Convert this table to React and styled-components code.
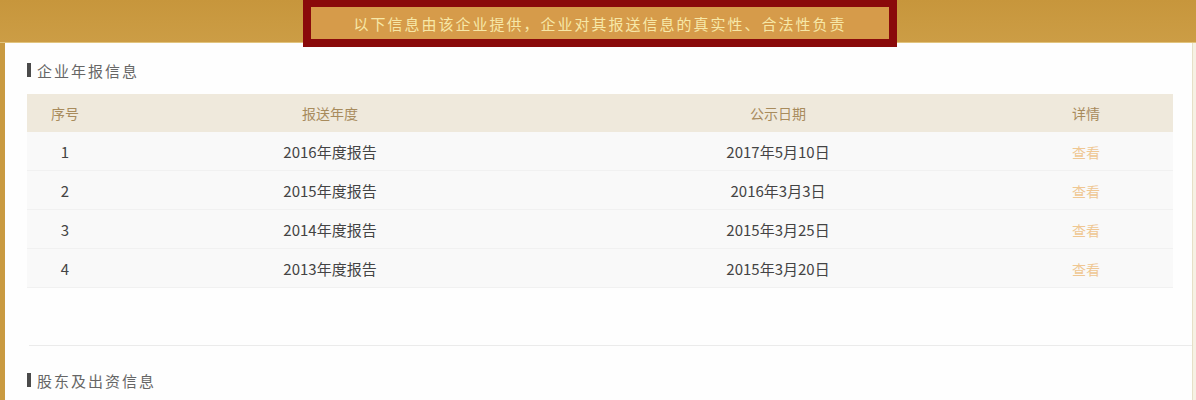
import React from 'react';
import styled, { createGlobalStyle } from 'styled-components';

const GlobalStyle = createGlobalStyle`
  html, body {
    margin: 0;
    padding: 0;
    background: #f6f1e4;
    font-family: "Noto Sans CJK SC", "Noto Sans", sans-serif;
  }
`;

const Page = styled.div`
  width: 1196px;
  height: 400px;
  overflow: hidden;
  display: flex;
  flex-direction: column;
`;

const TopBar = styled.div`
  height: 43px;
  background: linear-gradient(#c7963c, #cc9d45);
  border-bottom: 1px solid #e2c47e;
  box-sizing: border-box;
  display: flex;
  justify-content: center;
  padding-left: 4px;
  position: relative;
  z-index: 2;
`;

const Notice = styled.div`
  width: 594px;
  height: 47px;
  margin-bottom: -4px;
  box-sizing: border-box;
  border: 8px solid #8a0a0b;
  border-top-width: 7px;
  background: #d69b4a;
  color: #f7e8a8;
  font-size: 15px;
  letter-spacing: 2px;
  display: flex;
  align-items: center;
  justify-content: center;
`;

const Panel = styled.div`
  flex: 1;
  background: #fefefe;
  border-left: 5px solid #c99a40;
  border-right: 1px solid #e6dfc6;
  margin-right: 3px;
  padding: 16px 19px 0 22px;
  display: flex;
  flex-direction: column;
`;

const SectionTitle = styled.div`
  display: flex;
  align-items: center;
  gap: 6px;
  height: 22px;
  font-size: 15px;
  letter-spacing: 2px;
  color: #666;

  &::before {
    content: '';
    width: 4px;
    height: 14px;
    background: #4a4a4a;
  }
`;

const Table = styled.table`
  width: 1146px;
  margin-top: 13px;
  border-collapse: collapse;
  table-layout: fixed;
`;

const Th = styled.th`
  height: 38px;
  padding: 0;
  background: #efe9dc;
  color: #a88b5c;
  font-size: 14px;
  font-weight: normal;
  text-align: center;
`;

const Td = styled.td`
  height: 38px;
  padding: 0;
  background: #f9f9f9;
  border-bottom: 1px solid #f1f1f1;
  color: #444;
  font-size: 15px;
  text-align: center;
`;

const ViewLink = styled.a`
  color: #efc793;
  font-size: 14px;
  text-decoration: none;
  cursor: pointer;
`;

const Divider = styled.div`
  height: 1px;
  background: #ebebeb;
  margin: 57px -19px 0 2px;
`;

const SecondTitle = styled(SectionTitle)`
  margin-top: 23px;
`;

const reports = [
  { no: 1, year: '2016年度报告', date: '2017年5月10日' },
  { no: 2, year: '2015年度报告', date: '2016年3月3日' },
  { no: 3, year: '2014年度报告', date: '2015年3月25日' },
  { no: 4, year: '2013年度报告', date: '2015年3月20日' },
];

export default function App() {
  return (
    <Page>
      <GlobalStyle />
      <TopBar>
        <Notice>以下信息由该企业提供，企业对其报送信息的真实性、合法性负责</Notice>
      </TopBar>
      <Panel>
        <SectionTitle>企业年报信息</SectionTitle>
        <Table>
          <colgroup>
            <col style={{ width: 76 }} />
            <col style={{ width: 454 }} />
            <col style={{ width: 442 }} />
            <col style={{ width: 174 }} />
          </colgroup>
          <thead>
            <tr>
              <Th>序号</Th>
              <Th>报送年度</Th>
              <Th>公示日期</Th>
              <Th>详情</Th>
            </tr>
          </thead>
          <tbody>
            {reports.map((r) => (
              <tr key={r.no}>
                <Td>{r.no}</Td>
                <Td>{r.year}</Td>
                <Td>{r.date}</Td>
                <Td>
                  <ViewLink>查看</ViewLink>
                </Td>
              </tr>
            ))}
          </tbody>
        </Table>
        <Divider />
        <SecondTitle>股东及出资信息</SecondTitle>
      </Panel>
    </Page>
  );
}
